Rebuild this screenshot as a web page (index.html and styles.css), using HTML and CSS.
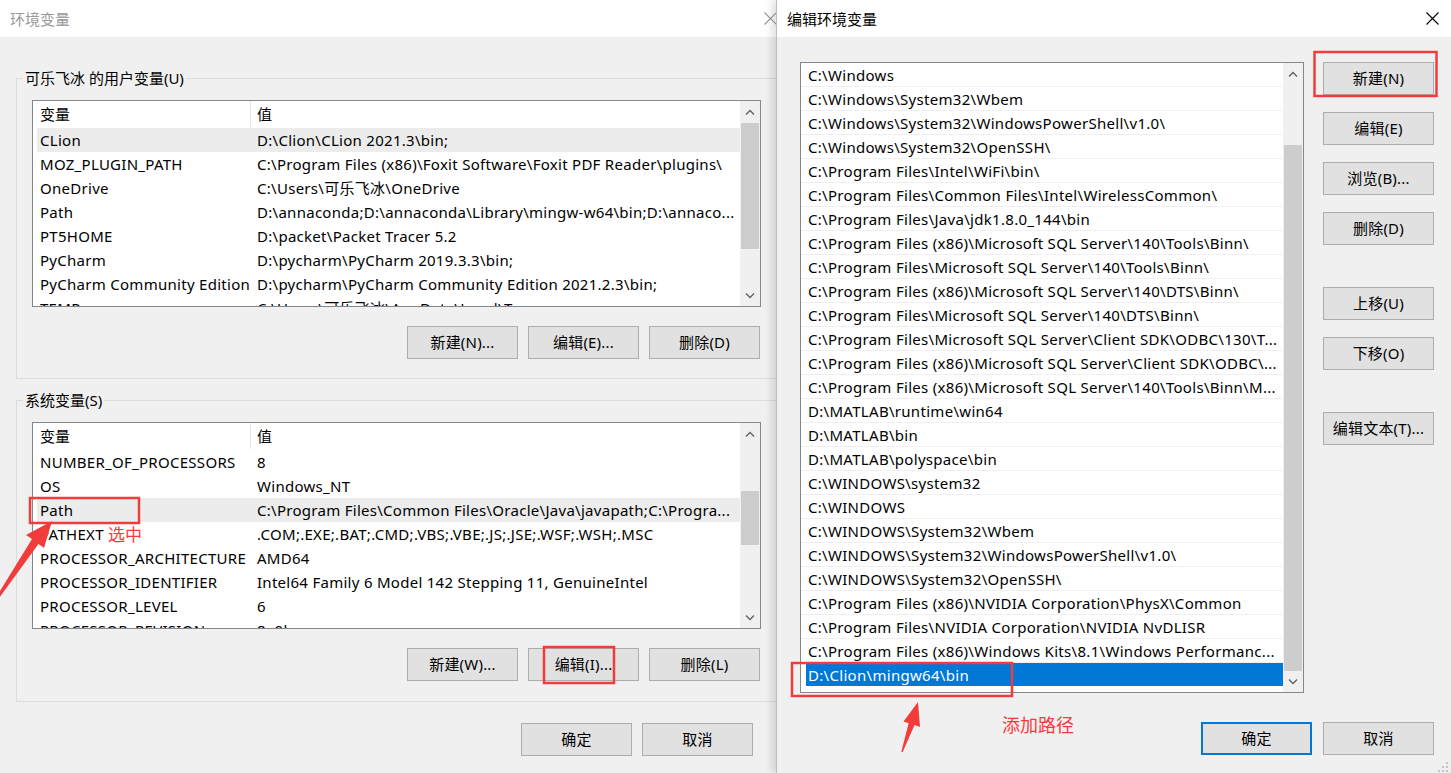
FILE: index.html
```html
<!DOCTYPE html>
<html lang="zh-CN">
<head>
<meta charset="utf-8">
<title>环境变量</title>
<link rel="stylesheet" href="styles.css">
</head>
<body>
<div class="screen">

  <div class="env">
    <div class="env-inner">
      <div class="titlebar">
        <span class="title">环境变量</span>
        <span class="close close-env"><svg width="13" height="13" viewBox="0 0 13 13"><path d="M0.5 0.5L12.5 12.5M12.5 0.5L0.5 12.5" stroke="#999" stroke-width="1.1" fill="none"/></svg></span>
      </div>

      <fieldset class="group group-user">
        <legend>可乐飞冰 的用户变量(U)</legend>
        <div class="listview">
          <div class="lv-content">
            <div class="lv-head"><div class="c1">变量</div><div class="c2">值</div></div>
            <div class="lv-row sel"><div class="c1">CLion</div><div class="c2">D:\Clion\CLion 2021.3\bin;</div></div>
            <div class="lv-row"><div class="c1">MOZ_PLUGIN_PATH</div><div class="c2">C:\Program Files (x86)\Foxit Software\Foxit PDF Reader\plugins\</div></div>
            <div class="lv-row"><div class="c1">OneDrive</div><div class="c2">C:\Users\可乐飞冰\OneDrive</div></div>
            <div class="lv-row"><div class="c1">Path</div><div class="c2">D:\annaconda;D:\annaconda\Library\mingw-w64\bin;D:\annaco...</div></div>
            <div class="lv-row"><div class="c1">PT5HOME</div><div class="c2">D:\packet\Packet Tracer 5.2</div></div>
            <div class="lv-row"><div class="c1">PyCharm</div><div class="c2">D:\pycharm\PyCharm 2019.3.3\bin;</div></div>
            <div class="lv-row"><div class="c1">PyCharm Community Edition</div><div class="c2">D:\pycharm\PyCharm Community Edition 2021.2.3\bin;</div></div>
            <div class="lv-row"><div class="c1">TEMP</div><div class="c2">C:\Users\可乐飞冰\AppData\Local\Temp</div></div>
          </div>
          <div class="vscroll">
            <div class="sarrow"><svg width="10" height="6" viewBox="0 0 10 6"><path d="M1 5.5L5 1.5L9 5.5" fill="none" stroke="#606060" stroke-width="1.3"/></svg></div>
            <div class="track"><div class="thumb thumb-user"></div></div>
            <div class="sarrow"><svg width="10" height="6" viewBox="0 0 10 6"><path d="M1 0.5L5 4.5L9 0.5" fill="none" stroke="#606060" stroke-width="1.3"/></svg></div>
          </div>
        </div>
        <div class="btnrow">
          <button class="btn">新建(N)...</button>
          <button class="btn">编辑(E)...</button>
          <button class="btn">删除(D)</button>
        </div>
      </fieldset>

      <fieldset class="group group-sys">
        <legend>系统变量(S)</legend>
        <div class="listview">
          <div class="lv-content">
            <div class="lv-head"><div class="c1">变量</div><div class="c2">值</div></div>
            <div class="lv-row"><div class="c1">NUMBER_OF_PROCESSORS</div><div class="c2">8</div></div>
            <div class="lv-row"><div class="c1">OS</div><div class="c2">Windows_NT</div></div>
            <div class="lv-row sel"><div class="c1">Path</div><div class="c2">C:\Program Files\Common Files\Oracle\Java\javapath;C:\Progra...</div></div>
            <div class="lv-row"><div class="c1">PATHEXT</div><div class="c2">.COM;.EXE;.BAT;.CMD;.VBS;.VBE;.JS;.JSE;.WSF;.WSH;.MSC</div></div>
            <div class="lv-row"><div class="c1">PROCESSOR_ARCHITECTURE</div><div class="c2">AMD64</div></div>
            <div class="lv-row"><div class="c1">PROCESSOR_IDENTIFIER</div><div class="c2">Intel64 Family 6 Model 142 Stepping 11, GenuineIntel</div></div>
            <div class="lv-row"><div class="c1">PROCESSOR_LEVEL</div><div class="c2">6</div></div>
            <div class="lv-row"><div class="c1">PROCESSOR_REVISION</div><div class="c2">8e0b</div></div>
          </div>
          <div class="vscroll">
            <div class="sarrow"><svg width="10" height="6" viewBox="0 0 10 6"><path d="M1 5.5L5 1.5L9 5.5" fill="none" stroke="#606060" stroke-width="1.3"/></svg></div>
            <div class="track"><div class="thumb thumb-sys"></div></div>
            <div class="sarrow"><svg width="10" height="6" viewBox="0 0 10 6"><path d="M1 0.5L5 4.5L9 0.5" fill="none" stroke="#606060" stroke-width="1.3"/></svg></div>
          </div>
        </div>
        <div class="btnrow">
          <button class="btn">新建(W)...</button>
          <button class="btn">编辑(I)...</button>
          <button class="btn">删除(L)</button>
        </div>
      </fieldset>

      <div class="footrow footrow-env">
        <button class="btn">确定</button>
        <button class="btn">取消</button>
      </div>
    </div>
  </div>

  <div class="edit">
    <div class="titlebar">
      <span class="title">编辑环境变量</span>
      <span class="close close-edit"><svg width="13" height="13" viewBox="0 0 13 13"><path d="M0.5 0.5L12.5 12.5M12.5 0.5L0.5 12.5" stroke="#000" stroke-width="1.1" fill="none"/></svg></span>
    </div>
    <div class="edit-main">
      <div class="pathlist">
        <div class="pl-items">
          <div class="pl-row">C:\Windows</div>
          <div class="pl-row">C:\Windows\System32\Wbem</div>
          <div class="pl-row">C:\Windows\System32\WindowsPowerShell\v1.0\</div>
          <div class="pl-row">C:\Windows\System32\OpenSSH\</div>
          <div class="pl-row">C:\Program Files\Intel\WiFi\bin\</div>
          <div class="pl-row">C:\Program Files\Common Files\Intel\WirelessCommon\</div>
          <div class="pl-row">C:\Program Files\Java\jdk1.8.0_144\bin</div>
          <div class="pl-row">C:\Program Files (x86)\Microsoft SQL Server\140\Tools\Binn\</div>
          <div class="pl-row">C:\Program Files\Microsoft SQL Server\140\Tools\Binn\</div>
          <div class="pl-row">C:\Program Files (x86)\Microsoft SQL Server\140\DTS\Binn\</div>
          <div class="pl-row">C:\Program Files\Microsoft SQL Server\140\DTS\Binn\</div>
          <div class="pl-row">C:\Program Files\Microsoft SQL Server\Client SDK\ODBC\130\T...</div>
          <div class="pl-row">C:\Program Files (x86)\Microsoft SQL Server\Client SDK\ODBC\...</div>
          <div class="pl-row">C:\Program Files (x86)\Microsoft SQL Server\140\Tools\Binn\M...</div>
          <div class="pl-row">D:\MATLAB\runtime\win64</div>
          <div class="pl-row">D:\MATLAB\bin</div>
          <div class="pl-row">D:\MATLAB\polyspace\bin</div>
          <div class="pl-row">C:\WINDOWS\system32</div>
          <div class="pl-row">C:\WINDOWS</div>
          <div class="pl-row">C:\WINDOWS\System32\Wbem</div>
          <div class="pl-row">C:\WINDOWS\System32\WindowsPowerShell\v1.0\</div>
          <div class="pl-row">C:\WINDOWS\System32\OpenSSH\</div>
          <div class="pl-row">C:\Program Files (x86)\NVIDIA Corporation\PhysX\Common</div>
          <div class="pl-row">C:\Program Files\NVIDIA Corporation\NVIDIA NvDLISR</div>
          <div class="pl-row">C:\Program Files (x86)\Windows Kits\8.1\Windows Performanc...</div>
          <div class="pl-row sel">D:\Clion\mingw64\bin</div>
        </div>
        <div class="vscroll">
          <div class="sarrow"><svg width="10" height="6" viewBox="0 0 10 6"><path d="M1 5.5L5 1.5L9 5.5" fill="none" stroke="#606060" stroke-width="1.3"/></svg></div>
          <div class="track"><div class="thumb thumb-path"></div></div>
          <div class="sarrow"><svg width="10" height="6" viewBox="0 0 10 6"><path d="M1 0.5L5 4.5L9 0.5" fill="none" stroke="#606060" stroke-width="1.3"/></svg></div>
        </div>
      </div>
      <div class="btncol">
        <button class="btn">新建(N)</button>
        <button class="btn">编辑(E)</button>
        <button class="btn">浏览(B)...</button>
        <button class="btn">删除(D)</button>
        <button class="btn btn-sep">上移(U)</button>
        <button class="btn">下移(O)</button>
        <button class="btn btn-sep">编辑文本(T)...</button>
      </div>
    </div>
    <div class="footrow footrow-edit">
      <button class="btn btn-default">确定</button>
      <button class="btn">取消</button>
    </div>
  </div>

  <svg class="marks" width="1451" height="773" viewBox="0 0 1451 773">
    <rect x="30" y="498" width="109" height="25" fill="none" stroke="#f23c3c" stroke-width="2.5"/>
    <rect x="544" y="647" width="70" height="36" fill="none" stroke="#f23c3c" stroke-width="2.5"/>
    <rect x="1314.5" y="52" width="122" height="44" fill="none" stroke="#f23c3c" stroke-width="2.5"/>
    <rect x="792" y="663" width="220" height="33" fill="none" stroke="#f23c3c" stroke-width="2.5"/>
    <polygon points="52,521 44,548 38.5,544 -1,598 -3,596 32,539 26,535" fill="#f23c3c"/>
    <polygon points="918,702 920,727 914.5,725 902.7,752 901.3,751.8 908.7,723.2 903.5,721.5" fill="#f23c3c"/>
    <g fill="#c4c4c4">
      <rect x="1446" y="762" width="2" height="2"/>
      <rect x="1446" y="766" width="2" height="2"/>
      <rect x="1442" y="766" width="2" height="2"/>
      <rect x="1446" y="770" width="2" height="2"/>
      <rect x="1442" y="770" width="2" height="2"/>
      <rect x="1438" y="770" width="2" height="2"/>
    </g>
  </svg>
  <span class="note note-select">选中</span>
  <span class="note note-add">添加路径</span>
</div>
</body>
</html>
```
FILE: styles.css
```css
* { box-sizing: border-box; }
html, body { margin: 0; padding: 0; }
body {
  width: 1451px;
  height: 773px;
  overflow: hidden;
  background: #f0f0f0;
  font-family: "Noto Sans", "Noto Sans CJK SC", sans-serif;
  font-size: 15px;
  color: #000;
}
.screen {
  position: relative;
  display: flex;
  width: 1451px;
  height: 773px;
}

/* ---------- title bars ---------- */
.titlebar {
  height: 37px;
  background: #fff;
  display: flex;
  align-items: center;
  padding-left: 10px;
  font-size: 15px;
  font-family: "Noto Sans CJK SC", sans-serif;
}
.titlebar .close {
  margin-left: auto;
  display: flex;
  justify-content: center;
  align-items: center;
  height: 37px;
}
.close-env { width: 46px; margin-right: 3px; }
.close-edit { width: 38px; }
.env .titlebar { color: #999; }

/* ---------- left dialog ---------- */
.env {
  width: 776px;
  flex: none;
  height: 773px;
  overflow: hidden;
}
.env-inner {
  width: 796px;
  height: 773px;
  background: #f0f0f0;
}
.group {
  margin: 31px 0 0 16px;
  width: 764px;
  min-width: 0;
  padding: 12px 15px 19px 15px;
  border: 1px solid #dcdcdc;
}
.group-sys { margin-top: 11px; padding-bottom: 20px; }
.group legend {
  padding: 0 2px;
  margin-left: -9px;
  height: 20px;
  line-height: 20px;
  font-size: 15px;
}

.listview {
  width: 729px;
  height: 207px;
  border: 1px solid #828790;
  background: #fff;
  display: flex;
  overflow: hidden;
}
.lv-content {
  flex: 1;
  min-width: 0;
  overflow: hidden;
}
.lv-head, .lv-row {
  display: flex;
  white-space: nowrap;
}
.lv-row { letter-spacing: 0.28px; }
.lv-head { height: 27px; line-height: 27px; }
.lv-row { height: 24px; line-height: 24px; margin-left: 4px; }
.lv-row.sel { background: #ececec; }
.lv-head .c1 {
  width: 218px;
  padding-left: 7px;
  border-right: 1px solid #e5e5e5;
  height: 26px;
}
.lv-row .c1 { width: 214px; padding-left: 3px; }
.c1, .c2 { overflow: hidden; flex: none; }
.c2 { flex: 1; padding-left: 6px; }

.vscroll {
  width: 20px;
  flex: none;
  background: #f0f0f0;
  display: flex;
  flex-direction: column;
}
.sarrow {
  height: 21px;
  flex: none;
  display: flex;
  align-items: center;
  justify-content: center;
}
.track { flex: 1; }
.thumb { background: #cdcdcd; margin: 0 1px; }
.thumb-user { margin-top: 1px; height: 126px; }
.thumb-sys { margin-top: 47px; height: 54px; }
.thumb-path { margin-top: 61px; height: 526px; }

.btnrow {
  width: 729px;
  display: flex;
  justify-content: flex-end;
  gap: 10px;
  margin-top: 19px;
  padding-right: 1px;
}
.btn {
  width: 111px;
  height: 33px;
  background: #e1e1e1;
  border: 1px solid #adadad;
  padding: 0;
  font-family: "Noto Sans", "Noto Sans CJK SC", sans-serif;
  font-size: 15px;
  color: #000;
  line-height: 31px;
  text-align: center;
  letter-spacing: 0.2px;
}
.footrow {
  display: flex;
  justify-content: flex-end;
  gap: 10px;
}
.footrow-env { margin-top: 21px; padding-right: 43px; }

/* ---------- right dialog ---------- */
.edit {
  width: 675px;
  flex: none;
  height: 773px;
  background: #f0f0f0;
  border-left: 1px solid #bdbdbd;
  box-shadow: -4px 0 8px rgba(0, 0, 0, 0.13);
  position: relative;
  z-index: 1;
}
.edit .titlebar { color: #000; }
.edit-main {
  display: flex;
  padding: 25px 0 0 23px;
}
.pathlist {
  width: 504px;
  height: 631px;
  border: 1px solid #828790;
  background: #fff;
  display: flex;
  overflow: hidden;
}
.pl-items {
  flex: 1;
  min-width: 0;
  overflow: hidden;
}
.pl-row {
  height: 24px;
  line-height: 24px;
  padding-left: 7px;
  border-bottom: 1px solid #f0f0f0;
  white-space: nowrap;
  overflow: hidden;
  letter-spacing: 0.3px;
}
.pl-row.sel {
  background: #0078d7;
  color: #fff;
  margin-left: 5px;
  padding-left: 2px;
  border-bottom-color: #fff;
}
.btncol {
  margin-left: 19px;
  display: flex;
  flex-direction: column;
  gap: 17px;
}
.btncol .btn-sep { margin-top: 25px; }
.footrow-edit { margin-top: 29px; padding-right: 17px; gap: 11px; }
.btn-default { border: 2px solid #0078d7; line-height: 29px; }

/* ---------- annotations ---------- */
.marks {
  position: absolute;
  left: 0;
  top: 0;
  z-index: 5;
  pointer-events: none;
}
.note {
  position: absolute;
  z-index: 6;
  color: #f23c3c;
  font-family: "Noto Sans CJK SC", sans-serif;
  white-space: nowrap;
}
.note-select { left: 108px; top: 523px; font-size: 17px; line-height: 22px; }
.note-add { left: 1002px; top: 712px; font-size: 18px; line-height: 24px; }
```
